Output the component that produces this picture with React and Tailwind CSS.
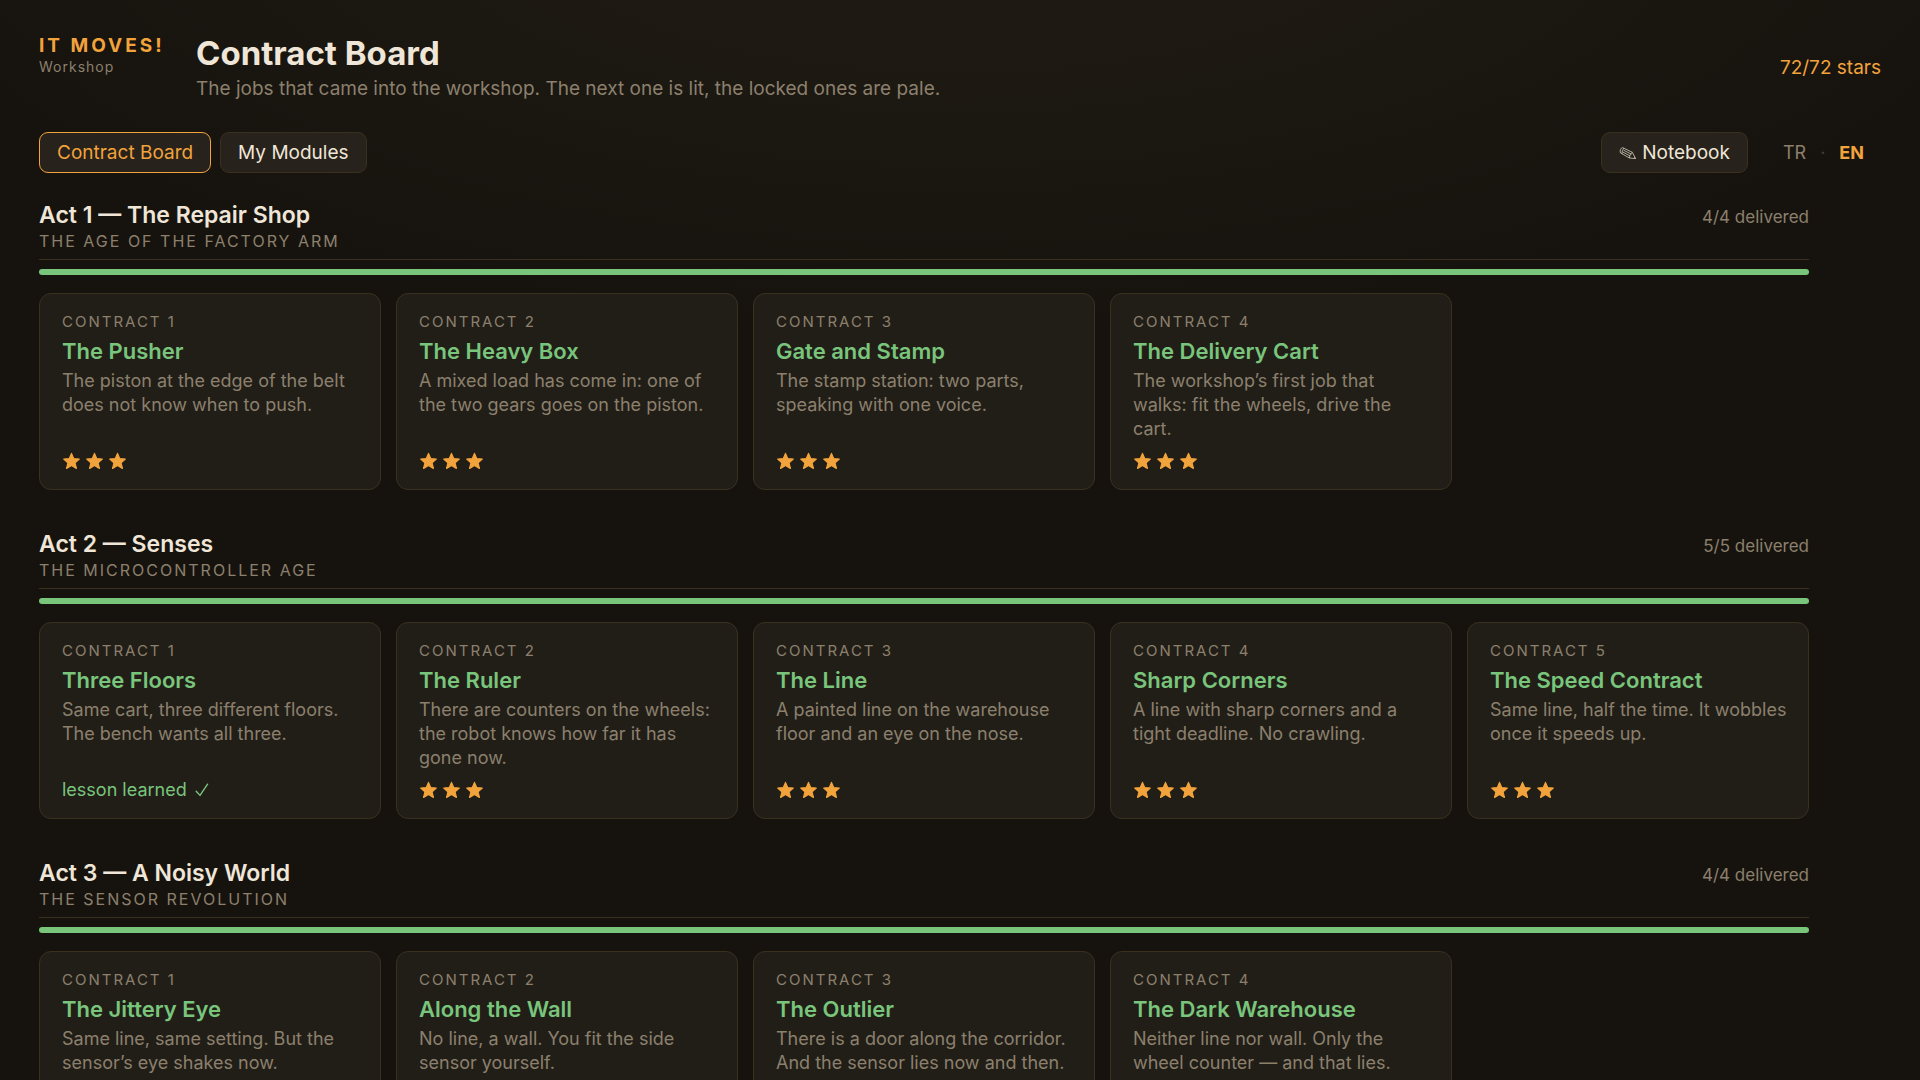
const ACTS = [
  {
    title: "Act 1 — The Repair Shop",
    age: "The age of the factory arm",
    delivered: 4,
    contracts: [
      { name: "The Pusher", text: "The piston at the edge of the belt does not know when to push." },
      { name: "The Heavy Box", text: "A mixed load has come in: one of the two gears goes on the piston." },
      { name: "Gate and Stamp", text: "The stamp station: two parts, speaking with one voice." },
      { name: "The Delivery Cart", text: "The workshop’s first job that walks: fit the wheels, drive the cart." },
    ],
  },
  {
    title: "Act 2 — Senses",
    age: "The microcontroller age",
    delivered: 5,
    contracts: [
      { name: "Three Floors", text: "Same cart, three different floors. The bench wants all three.", lesson: true },
      { name: "The Ruler", text: "There are counters on the wheels: the robot knows how far it has gone now." },
      { name: "The Line", text: "A painted line on the warehouse floor and an eye on the nose." },
      { name: "Sharp Corners", text: "A line with sharp corners and a tight deadline. No crawling." },
      { name: "The Speed Contract", text: "Same line, half the time. It wobbles once it speeds up." },
    ],
  },
  {
    title: "Act 3 — A Noisy World",
    age: "The sensor revolution",
    delivered: 4,
    contracts: [
      { name: "The Jittery Eye", text: "Same line, same setting. But the sensor’s eye shakes now." },
      { name: "Along the Wall", text: "No line, a wall. You fit the side sensor yourself." },
      { name: "The Outlier", text: "There is a door along the corridor. And the sensor lies now and then." },
      { name: "The Dark Warehouse", text: "Neither line nor wall. Only the wheel counter — and that lies." },
    ],
  },
];

function Star() {
  return (
    <svg viewBox="0 0 19 19" className="size-[19px] fill-[#f2a33c] stroke-[#f2a33c]" strokeWidth="1.2" strokeLinejoin="round" aria-hidden="true">
      <path d="M9.5 1.4 11.7 6.6 17.3 7.1 13.1 10.8 14.4 16.4 9.5 13.4 4.6 16.4 5.9 10.8 1.7 7.1 7.3 6.6Z" />
    </svg>
  );
}

function Check() {
  return (
    <svg viewBox="0 0 14 14" className="size-3.5 fill-none stroke-[#79c57c]" strokeWidth="1.4" strokeLinecap="round" strokeLinejoin="round" aria-hidden="true">
      <path d="M1.2 8.2 5 12.4 12.6 1.2" />
    </svg>
  );
}

function Pencil() {
  return (
    <svg viewBox="0 0 18 14" className="h-3.5 w-[18px] fill-none stroke-[#d5cdbf]" strokeWidth="0.8" strokeLinejoin="round" aria-hidden="true">
      <path d="M3.6 1.6 13.4 6.4 16.6 12.6 10.4 12 1.4 6.8C.6 4.6 1.6 2 3.6 1.6ZM5 2.4C3.4 3.4 2.8 5.4 3.2 7.6M4.6 4.2 12.4 8.2M3.8 6 11.2 10M13.4 6.4C11.6 7.6 10.4 9.6 10.4 12M15.2 12.2 16 11.2" />
    </svg>
  );
}

function Contract({ number, name, text, lesson }) {
  return (
    <button type="button" className="flex min-h-[197px] flex-col items-start rounded-xl border border-[#3a3020] bg-[#211e18] pt-[17px] pr-5 pb-4 pl-[22px] text-left">
      <span className="text-[15px] leading-[22px] tracking-[2px] text-[#8c806d] uppercase">Contract {number}</span>
      <span className="mt-[3px] text-[22px] leading-[30px] font-semibold text-[#79c57c]">{name}</span>
      <span className="mt-[3px] text-lg leading-6 text-[#8c806d]">{text}</span>
      {lesson ? (
        <span className="mt-auto flex items-center gap-2 text-lg leading-6 text-[#79c57c]">
          lesson learned <Check />
        </span>
      ) : (
        <span className="mt-auto flex h-6 items-center gap-1" role="img" aria-label="3 of 3 stars">
          <Star />
          <Star />
          <Star />
        </span>
      )}
    </button>
  );
}

function Act({ title, age, delivered, contracts }) {
  return (
    <section>
      <header className="flex items-start justify-between border-b border-[#3a3020] pb-1.5">
        <div>
          <h2 className="text-[23px] leading-7 font-semibold text-[#efe6d8]">{title}</h2>
          <p className="text-base leading-6 tracking-[2px] text-[#8c806d] uppercase">{age}</p>
        </div>
        <span className="pt-1 text-[17px] leading-6 text-[#8c806d]">{delivered}/{delivered} delivered</span>
      </header>
      <div className="mt-[9px] h-[6px] rounded-sm bg-[#79c57c]" />
      <div className="mt-[18px] grid grid-cols-5 gap-[15px]">
        {contracts.map((c, i) => (
          <Contract key={c.name} number={i + 1} {...c} />
        ))}
      </div>
    </section>
  );
}

export default function App() {
  return (
    <div className="h-screen overflow-hidden bg-[#16130e] bg-[radial-gradient(1500px_600px_at_50%_-10%,#211c15_0%,#16130e_75%)] px-[39px] pt-8 font-['Inter','Noto_Sans',sans-serif]">
      <header className="flex items-start">
        <div className="w-[157px] pt-0.5">
          <p className="text-[19px] leading-6 font-bold tracking-[3px] text-[#f2a33c]">IT MOVES!</p>
          <p className="text-sm leading-[18px] tracking-[1px] text-[#8c806d]">Workshop</p>
        </div>
        <div className="flex-1">
          <h1 className="text-[33px] leading-[42px] font-bold text-[#efe6d8]">Contract Board</h1>
          <p className="text-[19px] leading-[30px] text-[#8c806d]">The jobs that came into the workshop. The next one is lit, the locked ones are pale.</p>
        </div>
        <p className="self-center text-[19px] leading-6 text-[#f2a33c]">72/72 stars</p>
      </header>
      <nav className="mt-7 flex items-center justify-between text-[19px] leading-7">
        <div className="flex gap-[9px]">
          <button type="button" className="rounded-[9px] border border-[#f2a33c] bg-[#27221b] px-[17px] pt-1.5 pb-[5px] text-[#f2a33c]">Contract Board</button>
          <button type="button" className="rounded-[9px] border border-[#3a3020] bg-[#27221b] px-[17px] pt-1.5 pb-[5px] text-[#efe6d8]">My Modules</button>
        </div>
        <div className="flex items-center pr-[17px]">
          <button type="button" className="flex items-center gap-[5px] rounded-[9px] border border-[#3a3020] bg-[#27221b] px-[17px] pt-1.5 pb-[5px] text-[#efe6d8]">
            <Pencil /> Notebook
          </button>
          <button type="button" className="ml-[35px] text-lg text-[#8c806d]">TR</button>
          <span className="mx-3.5 text-lg text-[#4a4032]">·</span>
          <button type="button" className="text-lg font-bold text-[#f2a33c]">EN</button>
        </div>
      </nav>
      <main className="mt-7 flex max-w-[1770px] flex-col gap-10">
        {ACTS.map((act) => (
          <Act key={act.title} {...act} />
        ))}
      </main>
    </div>
  );
}
